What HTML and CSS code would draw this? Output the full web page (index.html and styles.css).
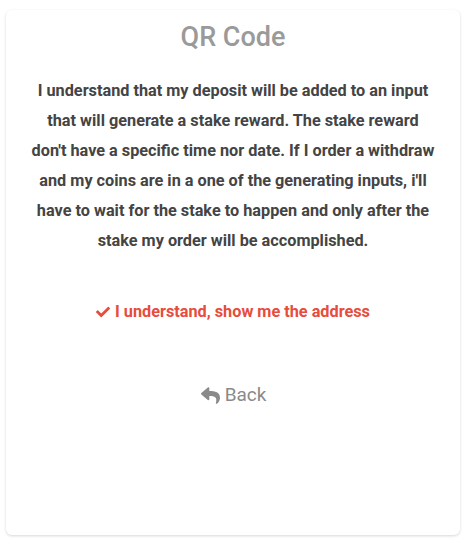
FILE: index.html
```html
<!DOCTYPE html>
<html>
<head>
<meta charset="utf-8">
<link rel="stylesheet" href="styles.css">
</head>
<body>
<div class="card">
  <h1 class="title">QR Code</h1>
  <p class="notice">I understand that my deposit will be added to an input that will generate a stake reward. The stake reward don't have a specific time nor date. If I order a withdraw and my coins are in a one of the generating inputs, i'll have to wait for the stake to happen and only after the stake my order will be accomplished.</p>
  <a class="confirm" href="#"><svg class="check" viewBox="0 0 512 512" width="14" height="14"><path fill="currentColor" d="M173.9 439.4l-166.4-166.4c-10-10-10-26.2 0-36.2l36.2-36.2c10-10 26.2-10 36.2 0L192 312.7 432.1 72.6c10-10 26.2-10 36.2 0l36.2 36.2c10 10 10 26.2 0 36.2L210.1 439.4c-10 10-26.2 10-36.2 0z"/></svg>I understand, show me the address</a>
  <a class="back" href="#"><svg class="reply" viewBox="0 0 512 512" width="21" height="19"><path fill="currentColor" d="M8.3 189.8L184.3 37.8C199.7 24.5 224 35.3 224 56v80.1c160.6 1.8 288 34 288 186.3 0 61.4-39.6 122.3-83.3 154.1-13.7 9.9-33.1-2.5-28.1-18.6 45.3-144.9-21.5-183.4-176.6-185.6V360c0 20.7-24.3 31.5-39.7 18.2l-176-152c-11.1-9.6-11.1-26.8 0-36.4z"/></svg>Back</a>
</div>
</body>
</html>
```
FILE: styles.css
```css
html, body {
  margin: 0;
  padding: 0;
  background: #ffffff;
}
body {
  font-family: Roboto, "Liberation Sans", sans-serif;
  padding: 10px 7px 6px 6px;
}
.card {
  height: 525px;
  box-sizing: border-box;
  background: #fff;
  border-radius: 6px;
  box-shadow: 0 1px 3px rgba(0,0,0,0.16);
  display: flex;
  flex-direction: column;
  align-items: center;
  padding: 10px 24px 0;
}
.title {
  margin: 0;
  font-size: 27px;
  font-weight: 500;
  color: #9a9a9a;
  line-height: 34px;
}
.notice {
  margin: 22px 0 0;
  font-size: 16.25px;
  font-weight: 700;
  color: #444;
  line-height: 30px;
  text-align: center;
}
.confirm {
  margin-top: 46px;
  display: flex;
  align-items: center;
  gap: 5px;
  color: #e74c3c;
  font-size: 16.25px;
  font-weight: 700;
  text-decoration: none;
  line-height: 20px;
}
.check {
  display: block;
}
.back {
  margin-top: 62px;
  display: flex;
  align-items: center;
  gap: 4px;
  color: #8a8a8a;
  font-size: 19px;
  font-weight: 400;
  text-decoration: none;
  line-height: 22px;
}
.reply {
  display: block;
}
```
